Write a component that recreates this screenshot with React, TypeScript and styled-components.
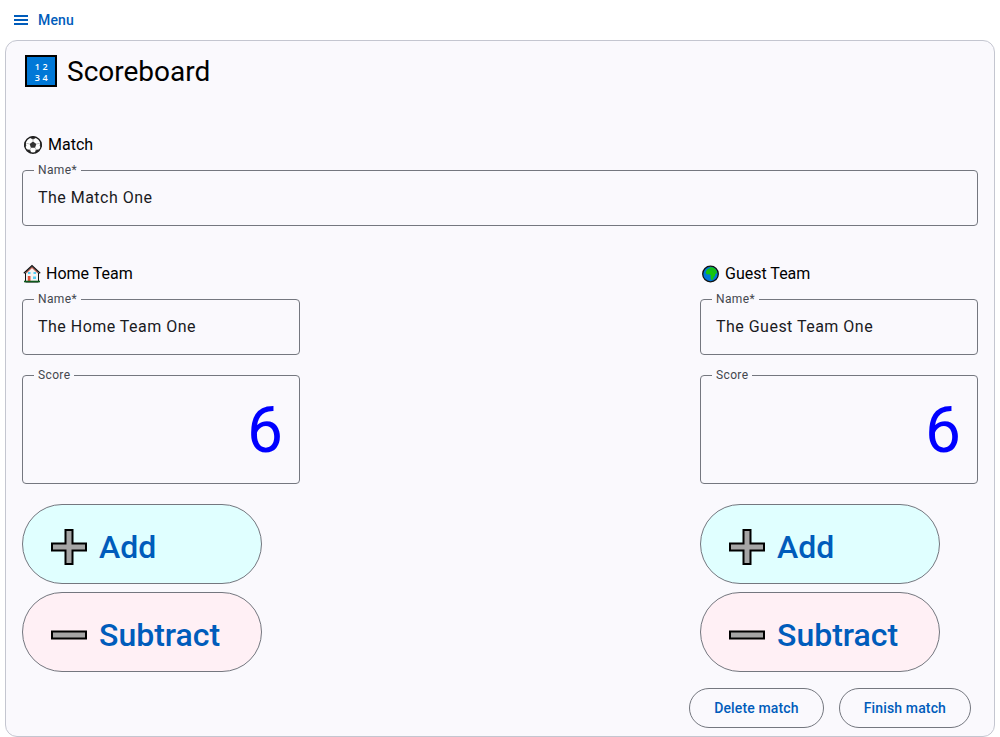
import React, { useId, useState } from "react";
import styled, { createGlobalStyle } from "styled-components";

const GlobalStyle = createGlobalStyle`
  *, *::before, *::after { box-sizing: border-box; }
  body {
    margin: 0;
    background: #ffffff;
    color: #000000;
    font-family: Roboto, "Liberation Sans", sans-serif;
    font-size: 16px;
    line-height: 24px;
  }
  button, input { font-family: inherit; }
`;

const TopBar = styled.header`
  display: flex;
  align-items: center;
  height: 40px;
  padding: 0 14px;
`;

const MenuButton = styled.button`
  display: flex;
  align-items: center;
  gap: 10px;
  padding: 0;
  border: 0;
  background: none;
  color: #005cbb;
  font-size: 14px;
  font-weight: 500;
  line-height: 20px;
  letter-spacing: 0.01em;
  cursor: pointer;
`;

const Card = styled.main`
  margin: 0 5px;
  padding: 14px 16px 8px;
  border: 1px solid #c4c6d0;
  border-radius: 12px;
  background: #faf9fd;
`;

const Title = styled.h1`
  display: flex;
  align-items: flex-start;
  gap: 10px;
  margin: 0 0 44px;
  padding-left: 3px;
  font-size: 28px;
  font-weight: 400;
  line-height: 34px;
`;

const SectionTitle = styled.h2`
  display: flex;
  align-items: center;
  gap: 4px;
  margin: 0 0 6px;
  font-size: 16px;
  font-weight: 400;
  line-height: 24px;
`;

const MatchSection = styled.section`
  margin-bottom: 36px;
`;

const Teams = styled.div`
  display: flex;
  flex-wrap: wrap;
  justify-content: space-between;
`;

const TeamColumn = styled.section`
  flex: 0 1 278px;
`;

const Outline = styled.fieldset`
  min-width: 0;
  margin: 0 0 13px;
  padding: 0;
  border: 1px solid #74777f;
  border-radius: 4px;
`;

const Legend = styled.legend`
  margin-left: 11px;
  padding: 0 4px;
  color: #44474e;
  font-size: 12px;
  line-height: 15px;
  letter-spacing: 0.03em;

  label { display: block; }
`;

const TextInput = styled.input<{ $score?: boolean }>`
  display: block;
  width: 100%;
  padding: ${(p) => (p.$score ? "10px 16px 15px" : "7px 15px 16px")};
  border: 0;
  outline: 0;
  background: none;
  color: ${(p) => (p.$score ? "#0000ff" : "#1a1b1f")};
  font-size: ${(p) => (p.$score ? "64px" : "16px")};
  line-height: ${(p) => (p.$score ? "75px" : "24px")};
  height: ${(p) => (p.$score ? "100px" : "47px")};
  letter-spacing: ${(p) => (p.$score ? "normal" : "0.03em")};
  text-align: ${(p) => (p.$score ? "right" : "left")};
`;

const ScoreButtons = styled.div`
  display: flex;
  flex-direction: column;
  align-items: flex-start;
  gap: 8px;
  padding-top: 7px;
`;

const ScoreButton = styled.button<{ $tint: string }>`
  display: flex;
  align-items: center;
  gap: 12px;
  width: 240px;
  max-width: 100%;
  height: 80px;
  padding: 5px 28px 0;
  border: 1px solid #74777f;
  border-radius: 40px;
  background: ${(p) => p.$tint};
  color: #005cbb;
  font-size: 32px;
  font-weight: 500;
  line-height: 40px;
  cursor: pointer;
`;

const Actions = styled.footer`
  display: flex;
  justify-content: flex-end;
  gap: 15px;
  margin-top: 16px;
  padding-right: 7px;
`;

const ActionButton = styled.button`
  height: 40px;
  padding: 0 24px;
  border: 1px solid #74777f;
  border-radius: 20px;
  background: none;
  color: #005cbb;
  font-size: 14px;
  font-weight: 500;
  line-height: 20px;
  letter-spacing: 0.01em;
  cursor: pointer;
`;

const MenuIcon = () => (
  <svg width="14" height="10" viewBox="0 0 14 10" aria-hidden="true">
    <path d="M0 1h14M0 5h14M0 9h14" stroke="#005cbb" strokeWidth="2" />
  </svg>
);

const NumbersIcon = () => (
  <svg width="32" height="32" viewBox="0 0 32 32" aria-hidden="true">
    <rect x="1" y="1" width="30" height="30" fill="#0078d7" stroke="#000" strokeWidth="2" />
    <g fill="#fff" fontFamily="Open Sans, sans-serif" fontSize="9" fontWeight="600" textAnchor="middle">
      <text x="12.4" y="15">1</text>
      <text x="20" y="15">2</text>
      <text x="12.4" y="26">3</text>
      <text x="20" y="26">4</text>
    </g>
  </svg>
);

const BallIcon = () => (
  <svg width="22" height="20" viewBox="0 0 22 20" aria-hidden="true">
    <circle cx="11" cy="10" r="8.3" fill="#fff" stroke="#1b1b1b" strokeWidth="1.4" />
    <path d="M11 6.6l3.3 2.4-1.2 3.8H8.9L7.7 9z" fill="#333" />
    <path
      d="M7.8 2.4L11 4l3.2-1.6-3.2-.8zM3.2 7.6l.6 3L2.6 12zM18.8 7.6l-.6 3 1.2 1.4zM5.2 14.8l2.8.4.8 2.8-2.2-1zM16.800 14.800l-2.800.4-.8 2.800 2.200-1z"
      fill="#222"
      stroke="#222"
      strokeWidth=".7"
    />
    <path
      d="M11 4v2.600M14.300 9l3.500-.8M7.700 9l-3.500-.8M13.100 12.800l1.300 2.400M8.900 12.800l-1.300 2.400"
      stroke="#999"
      strokeWidth=".6"
    />
  </svg>
);

const HouseIcon = () => (
  <svg width="20" height="20" viewBox="0 0 20 20" aria-hidden="true">
    <path d="M3.5 9L10 2.7 16.5 9v9h-13z" fill="#f5f3f3" stroke="#111" strokeWidth="1" />
    <path d="M4.5 8.8L10 3.6l5.500 5.200" fill="none" stroke="#e0503a" strokeWidth="1" />
    <path d="M1.8 9.300L10 1.500l8.200 7.800" fill="none" stroke="#111" strokeWidth="1.2" />
    <path d="M6 8h2.500v2H6zM11.500 8H14v2h-2.500zM11 12.500h3V15h-3z" fill="#55cdf5" />
    <path d="M5.800 12h2.700v6H5.800z" fill="#e0503a" />
    <path d="M2 17.500h16" stroke="#0e5a1c" strokeWidth="1.6" />
  </svg>
);

const GlobeIcon = () => (
  <svg width="21" height="20" viewBox="0 0 21 20" aria-hidden="true">
    <circle cx="10.5" cy="10" r="7.8" fill="#0078d7" stroke="#111" strokeWidth="1.3" />
    <path
      d="M6 7.500L7.500 5l2-.4.600-1.300 2.900.2 2.300 1.400 1.700 3-.5 1.700-1.200.3-.2 1.800-1.400 1.500-.8 2.500-1.500.3-.9-2.300.2-2.400-1.400-1-2.300.1L5.700 9z"
      fill="#16c60c"
    />
    <path d="M9 6l2.500-.4 1.500.6M13.500 7l1.200 2" fill="none" stroke="#0b9a55" strokeWidth=".6" />
  </svg>
);

const PlusIcon = () => (
  <svg width="36" height="36" viewBox="0 0 36 36" aria-hidden="true">
    <path d="M14.5 1h7v13.5H35v7H21.5V35h-7V21.5H1v-7h13.5z" fill="#a5a5a5" stroke="#000" strokeWidth="2" />
  </svg>
);

const MinusIcon = () => (
  <svg width="36" height="36" viewBox="0 0 36 36" aria-hidden="true">
    <rect x="1" y="14.5" width="34" height="7" fill="#a5a5a5" stroke="#000" strokeWidth="2" />
  </svg>
);

type FieldProps = {
  label: string;
  value: string;
  onChange?: (value: string) => void;
  required?: boolean;
  score?: boolean;
};

function Field({ label, value, onChange, required, score }: FieldProps) {
  const id = useId();
  return (
    <Outline>
      <Legend>
        <label htmlFor={id}>{required ? `${label}*` : label}</label>
      </Legend>
      <TextInput
        id={id}
        type="text"
        value={value}
        required={required}
        readOnly={!onChange}
        onChange={(e) => onChange?.(e.target.value)}
        $score={score}
      />
    </Outline>
  );
}

type TeamProps = { title: string; icon: React.ReactNode; initialName: string };

function Team({ title, icon, initialName }: TeamProps) {
  const [name, setName] = useState(initialName);
  const [score, setScore] = useState(6);
  return (
    <TeamColumn>
      <SectionTitle>
        {icon}
        {title}
      </SectionTitle>
      <Field label="Name" value={name} onChange={setName} required />
      <Field label="Score" value={String(score)} score />
      <ScoreButtons>
        <ScoreButton type="button" $tint="#e0ffff" onClick={() => setScore(score + 1)}>
          <PlusIcon />
          Add
        </ScoreButton>
        <ScoreButton type="button" $tint="#fff0f5" onClick={() => setScore(Math.max(0, score - 1))}>
          <MinusIcon />
          Subtract
        </ScoreButton>
      </ScoreButtons>
    </TeamColumn>
  );
}

export default function App() {
  const [matchName, setMatchName] = useState("The Match One");
  return (
    <>
      <GlobalStyle />
      <TopBar>
        <MenuButton type="button">
          <MenuIcon />
          Menu
        </MenuButton>
      </TopBar>
      <Card>
        <Title>
          <NumbersIcon />
          Scoreboard
        </Title>
        <MatchSection>
          <SectionTitle>
            <BallIcon />
            Match
          </SectionTitle>
          <Field label="Name" value={matchName} onChange={setMatchName} required />
        </MatchSection>
        <Teams>
          <Team title="Home Team" icon={<HouseIcon />} initialName="The Home Team One" />
          <Team title="Guest Team" icon={<GlobeIcon />} initialName="The Guest Team One" />
        </Teams>
        <Actions>
          <ActionButton type="button">Delete match</ActionButton>
          <ActionButton type="button">Finish match</ActionButton>
        </Actions>
      </Card>
    </>
  );
}
